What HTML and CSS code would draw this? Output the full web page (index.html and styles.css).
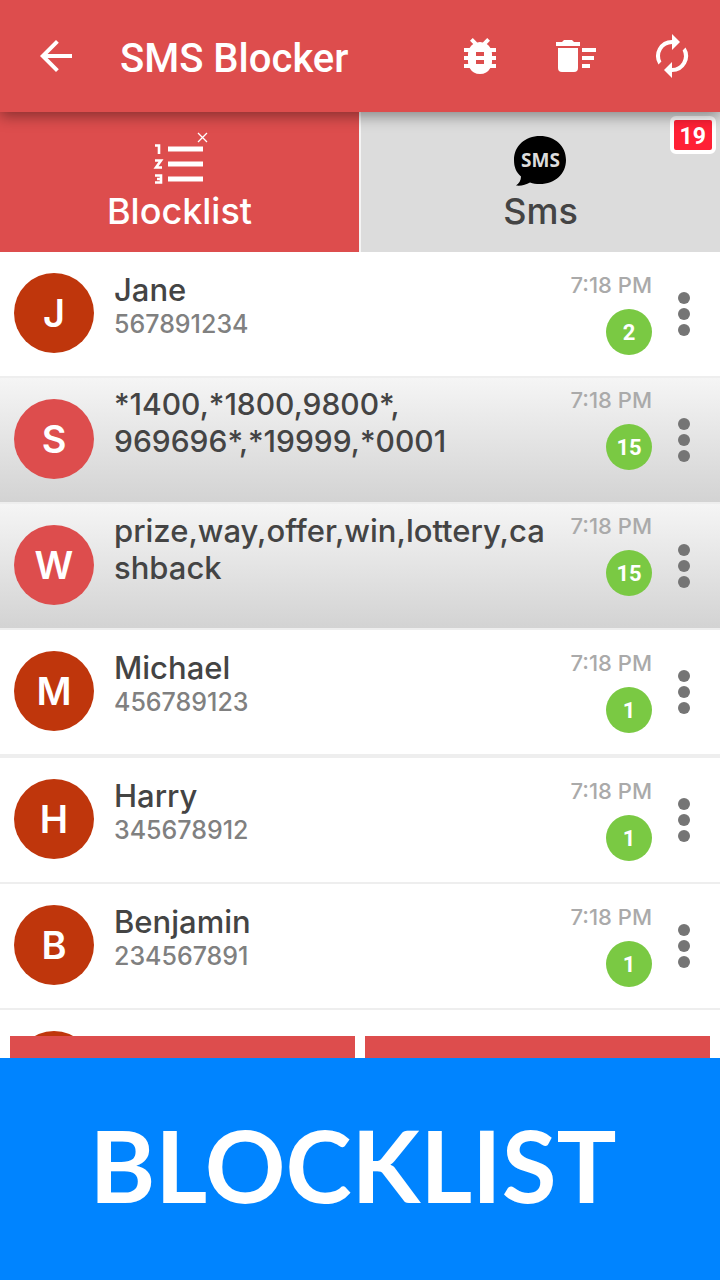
FILE: index.html
```html
<!DOCTYPE html>
<html lang="en">
<head>
    <meta charset="UTF-8">
    <meta name="viewport" content="width=device-width, initial-scale=1.0">
    <title>SMS Blocker</title>
    <link rel="stylesheet" href="styles.css">
</head>
<body>
    <header class="toolbar">
        <button class="icon-btn" aria-label="Back">
            <svg class="icon" viewBox="0 0 24 24"><path d="M20 11H7.8l5.6-5.6L12 4l-8 8 8 8 1.4-1.4L7.8 13H20z"/></svg>
        </button>
        <h1 class="title">SMS Blocker</h1>
        <button class="icon-btn" aria-label="Report a bug">
            <svg class="icon" viewBox="0 0 24 24"><path d="M20 8h-2.8a6 6 0 0 0-1.8-2L17 4.400 15.600 3l-2.200 2.200a6 6 0 0 0-2.800 0L8.400 3 7 4.400 8.600 6a6 6 0 0 0-1.800 2H4v2h2.100L6 11v1H4v2h2v1l.1 1H4v2h2.800a6 6 0 0 0 10.400 0H20v-2h-2.100l.1-1v-1h2v-2h-2v-1l-.1-1H20zm-6 8h-4v-2h4zm0-4h-4v-2h4z"/></svg>
        </button>
        <button class="icon-btn" aria-label="Clear list">
            <svg class="icon" viewBox="0 0 24 24"><path d="M15 16h4v2h-4zm0-8h7v2h-7zm0 4h6v2h-6zM3 18a2 2 0 0 0 2 2h6a2 2 0 0 0 2-2V8H3zM14 5h-3l-1-1H6L5 5H2v2h12z"/></svg>
        </button>
        <button class="icon-btn" aria-label="Refresh">
            <svg class="icon" viewBox="0 0 24 24"><path d="M12 6v3l4-4-4-4v3a8 8 0 0 0-6.760 12.260L6.700 14.800A6 6 0 0 1 12 6zm6.760 1.740L17.300 9.200A6 6 0 0 1 12 18v-3l-4 4 4 4v-3a8 8 0 0 0 6.760-12.260z"/></svg>
        </button>
    </header>

    <nav class="tabs">
        <button class="tab active">
            <svg class="tab-icon" viewBox="0 0 56 56">
                <path d="M16 16.500h35v5H16zM16 31.500h35v5H16zM16 46.500h35v5H16z" fill="#fff"/>
                <path d="M3 15.500h4V24M3 30.500h6L4 37.500h6M3 45.500h6v7H3M5 49h4" fill="none" stroke="#fff" stroke-width="2.600"/>
                <path d="M46 3l9 9M55 3l-9 9" stroke="#fff" stroke-width="1.300"/>
            </svg>
            <span>Blocklist</span>
        </button>
        <button class="tab">
            <svg class="tab-icon" viewBox="0 0 56 56">
                <path d="M27 6c15 0 26 10 26 24S42 54 27 54c-4 0-7-.5-10-1.500-4 2.500-9 3.500-14 3 3-2 5-5 5-9C3 42 1 37 1 30 1 16 12 6 27 6z"/>
                <text class="bubble-text" x="27.500" y="37" text-anchor="middle">SMS</text>
            </svg>
            <span>Sms</span>
            <span class="count">19</span>
        </button>
    </nav>

    <main class="content">
        <ul class="list">
            <li class="row">
                <span class="avatar">J</span>
                <div class="details">
                    <div class="name">Jane</div>
                    <div class="number">567891234</div>
                </div>
                <div class="meta">
                    <time class="time">7:18 PM</time>
                    <span class="badge">2</span>
                </div>
                <button class="more" aria-label="More options for Jane"><i></i><i></i><i></i></button>
            </li>
            <li class="row rule">
                <span class="avatar">S</span>
                <div class="details">
                    <div class="name series">*1400,*1800,9800*, 969696*,*19999,*0001</div>
                </div>
                <div class="meta">
                    <time class="time">7:18 PM</time>
                    <span class="badge">15</span>
                </div>
                <button class="more" aria-label="More options for number series"><i></i><i></i><i></i></button>
            </li>
            <li class="row rule">
                <span class="avatar">W</span>
                <div class="details">
                    <div class="name">prize,way,offer,win,lottery,ca<wbr>shback</div>
                </div>
                <div class="meta">
                    <time class="time">7:18 PM</time>
                    <span class="badge">15</span>
                </div>
                <button class="more" aria-label="More options for words"><i></i><i></i><i></i></button>
            </li>
            <li class="row thick">
                <span class="avatar">M</span>
                <div class="details">
                    <div class="name">Michael</div>
                    <div class="number">456789123</div>
                </div>
                <div class="meta">
                    <time class="time">7:18 PM</time>
                    <span class="badge">1</span>
                </div>
                <button class="more" aria-label="More options for Michael"><i></i><i></i><i></i></button>
            </li>
            <li class="row">
                <span class="avatar">H</span>
                <div class="details">
                    <div class="name">Harry</div>
                    <div class="number">345678912</div>
                </div>
                <div class="meta">
                    <time class="time">7:18 PM</time>
                    <span class="badge">1</span>
                </div>
                <button class="more" aria-label="More options for Harry"><i></i><i></i><i></i></button>
            </li>
            <li class="row">
                <span class="avatar">B</span>
                <div class="details">
                    <div class="name">Benjamin</div>
                    <div class="number">234567891</div>
                </div>
                <div class="meta">
                    <time class="time">7:18 PM</time>
                    <span class="badge">1</span>
                </div>
                <button class="more" aria-label="More options for Benjamin"><i></i><i></i><i></i></button>
            </li>
            <li class="row">
                <span class="avatar"></span>
            </li>
        </ul>
        <div class="actions">
            <button class="action" aria-label="Add to blocklist"></button>
            <button class="action" aria-label="Add rule"></button>
        </div>
    </main>

    <footer class="banner">BLOCKLIST</footer>
</body>
</html>
```

FILE: styles.css
```css
* {
    box-sizing: border-box;
}

body {
    display: flex;
    flex-direction: column;
    height: 100vh;
    margin: 0;
    font-family: Inter, "Open Sans", sans-serif;
    font-weight: 500;
    color: #444;
    background-color: #fff;
}

button {
    border: none;
    padding: 0;
    background: none;
    font: inherit;
    color: inherit;
    cursor: pointer;
}

.toolbar {
    display: flex;
    align-items: center;
    flex-shrink: 0;
    height: 112px;
    padding: 0 24px 0 32px;
    background-color: #dd4d4d;
    color: #fff;
    box-shadow: 0 4px 14px rgba(0, 0, 0, 0.4);
    z-index: 1;
}

.icon-btn {
    display: flex;
    margin-left: 48px;
}

.icon-btn:first-child {
    margin-left: 0;
}

.icon {
    width: 48px;
    height: 48px;
    fill: #fff;
}

.title {
    flex: 1;
    margin: 4px 0 0 40px;
    font-family: Roboto, sans-serif;
    font-size: 40px;
    font-weight: 500;
}

.tabs {
    display: flex;
    flex-shrink: 0;
    gap: 2px;
    height: 140px;
    background-color: #f4f4f4;
}

.tab {
    position: relative;
    display: flex;
    flex: 1;
    flex-direction: column;
    align-items: center;
    padding-top: 18px;
    background-color: #dcdcdc;
    font-size: 36px;
    line-height: 38px;
}

.tab.active {
    background-color: #dd4d4d;
    color: #fff;
}

.tab-icon {
    width: 56px;
    height: 56px;
    margin-bottom: 6px;
}

.bubble-text {
    fill: #dcdcdc;
    font-family: "Open Sans", sans-serif;
    font-size: 19px;
    font-weight: 700;
}

.count {
    position: absolute;
    top: 4px;
    right: 4px;
    padding: 3px 6px 0;
    border: 4px solid #fff;
    border-radius: 6px;
    background-color: #ff2035;
    color: #fff;
    font-family: Roboto, sans-serif;
    font-size: 23px;
    font-weight: 700;
    line-height: 27px;
}

.content {
    position: relative;
    flex: 1;
    min-height: 0;
    overflow: hidden;
}

.list {
    margin: 0;
    padding: 0;
    list-style: none;
}

.row {
    display: flex;
    align-items: flex-start;
    height: 126px;
    padding: 18px 16px 0 14px;
    border-bottom: 2px solid #eee;
}

.row.rule {
    padding-top: 7px;
    background: linear-gradient(#f5f5f5, #d3d3d3);
}

.row.thick {
    height: 128px;
    border-bottom-width: 4px;
}

.avatar {
    display: flex;
    flex-shrink: 0;
    align-items: center;
    justify-content: center;
    width: 80px;
    height: 80px;
    margin-top: 3px;
    border-radius: 50%;
    background-color: #bf360c;
    color: #fff;
    font-size: 38px;
    font-weight: 600;
}

.rule .avatar {
    margin-top: 14px;
    background-color: #dd4d4d;
}

.details {
    flex: 1;
    min-width: 0;
    padding: 1px 0 0 20px;
}

.name {
    font-size: 31px;
    line-height: 37px;
    overflow-wrap: anywhere;
}

.series {
    font-size: 30px;
}

.number {
    color: #808080;
    font-size: 25px;
    line-height: 33px;
}

.meta {
    display: flex;
    flex-direction: column;
    align-items: flex-end;
    padding-left: 8px;
}

.time {
    color: #aaa;
    font-size: 22px;
    line-height: 30px;
}

.badge {
    width: 46px;
    height: 46px;
    margin-top: 9px;
    border-radius: 50%;
    background-color: #7ac943;
    color: #fff;
    font-family: Roboto, sans-serif;
    font-size: 22px;
    font-weight: 700;
    line-height: 48px;
    text-align: center;
}

.more {
    display: flex;
    flex-direction: column;
    align-items: center;
    gap: 4px;
    width: 40px;
    margin: 22px 0 0 12px;
}

.rule .more {
    margin-top: 33px;
}

.more i {
    width: 12px;
    height: 12px;
    border-radius: 50%;
    background-color: #757575;
}

.actions {
    position: absolute;
    left: 10px;
    right: 10px;
    bottom: 0;
    display: flex;
    gap: 10px;
}

.action {
    flex: 1;
    height: 22px;
    background-color: #dd4d4d;
}

.banner {
    display: flex;
    flex-shrink: 0;
    align-items: center;
    justify-content: center;
    height: 222px;
    padding: 0 14px 10px 0;
    background-color: #0084ff;
    color: #fff;
    font-family: Lato, sans-serif;
    font-size: 100px;
    font-weight: 700;
}
```
